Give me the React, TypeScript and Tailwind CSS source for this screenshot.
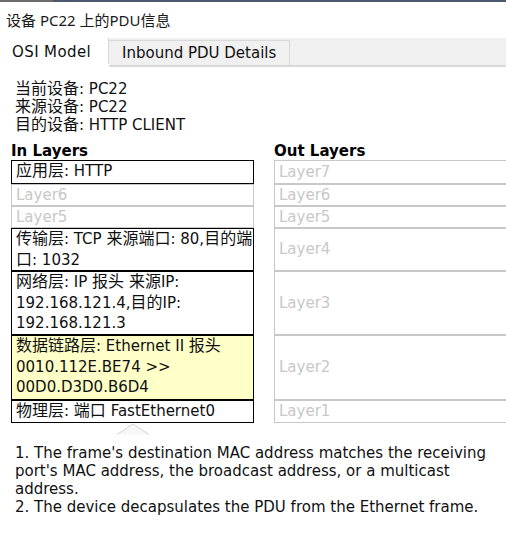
import type { ReactNode } from 'react'

const font = { fontFamily: '"DejaVu Sans", "Noto Sans CJK SC", sans-serif' }

// CJK runs are set a touch larger, as in the reference
function T({ s }: { s: string }) {
  const parts = s.split(/([\u3000-\u9fff\uff00-\uffef]+)/)
  return (
    <>
      {parts.map((p, i) =>
        /[\u3000-\u9fff\uff00-\uffef]/.test(p) ? (
          <span key={i} className="text-[16px]">
            {p}
          </span>
        ) : (
          <span key={i}>{p}</span>
        ),
      )}
    </>
  )
}

interface Row {
  inLines: string[] | null
  inLabel: string
  outLabel: string
  height: string
  yellow?: boolean
}

const rows: Row[] = [
  { inLines: ['应用层: HTTP'], inLabel: 'Layer7', outLabel: 'Layer7', height: 'h-[24px]' },
  { inLines: null, inLabel: 'Layer6', outLabel: 'Layer6', height: 'h-[22px]' },
  { inLines: null, inLabel: 'Layer5', outLabel: 'Layer5', height: 'h-[22px]' },
  { inLines: ['传输层: TCP 来源端口: 80,目的端', '口: 1032'], inLabel: '', outLabel: 'Layer4', height: 'h-[43px]' },
  {
    inLines: ['网络层: IP 报头 来源IP:', '192.168.121.4,目的IP:', '192.168.121.3'],
    inLabel: '',
    outLabel: 'Layer3',
    height: 'h-[64px]',
  },
  {
    inLines: ['数据链路层: Ethernet II 报头', '0010.112E.BE74 >>', '00D0.D3D0.B6D4'],
    inLabel: '',
    outLabel: 'Layer2',
    height: 'h-[65px]',
    yellow: true,
  },
  { inLines: ['物理层: 端口 FastEthernet0'], inLabel: '', outLabel: 'Layer1', height: 'h-[23px]' },
]

function Box({ children, active, yellow, height }: { children: ReactNode; active: boolean; yellow?: boolean; height: string }) {
  return (
    <div
      className={`${height} border px-[4px] overflow-hidden whitespace-nowrap ${
        active ? 'border-black text-[#101010]' : 'border-[#c8c8c8] text-[#c8c8c8] flex items-center'
      } ${yellow ? 'bg-[#ffffc8]' : 'bg-white'}`}
    >
      {children}
    </div>
  )
}

export default function App() {
  return (
    <div className="w-[506px] h-[559px] bg-white overflow-hidden text-[15px]" style={font}>
      <div className="flex h-[2px]">
        <div className="w-[53px] bg-[#6b6b6b]" />
        <div className="flex-1 bg-[#4b586a]" />
      </div>

      <div
        className="h-[36px] flex items-center pl-[6px] text-[15px] text-[#1a1a1a]"
        style={{ fontFamily: '"Noto Sans", "Noto Sans CJK SC", sans-serif' }}
      >
        设备 PC22 上的PDU信息
      </div>

      <div className="flex h-[26px]">
        <div className="w-[109px] bg-white border-r border-[#d9d9d9] flex items-center pl-[12px] pt-[3px] text-[#111] tracking-[0.4px]">
          OSI Model
        </div>
        <div className="flex-1 flex flex-col">
          <div className="h-[1px]" />
          <div className="flex-1 flex bg-[#f0f0f0] border-b-2 border-[#d9d9d9]">
            <div className="w-[181px] border-r border-t border-[#d9d9d9] mt-[2px] flex items-center pl-[13px] pt-[1px] text-[#111]">
              Inbound PDU Details
            </div>
          </div>
        </div>
      </div>

      <div className="pl-[15px] pt-[16px] leading-[18px] text-[#111]">
        <div>
          <T s="当前设备: PC22" />
        </div>
        <div>
          <T s="来源设备: PC22" />
        </div>
        <div>
          <T s="目的设备: HTTP CLIENT" />
        </div>
      </div>

      <div className="pl-[11px] pt-[9px]">
        <div className="grid grid-cols-[243px_243px] gap-x-[20px]">
          <div className="font-bold leading-[17px] text-black">In Layers</div>
          <div className="font-bold leading-[17px] text-black">Out Layers</div>
          {rows.map((r, i) => (
            <div key={i} className="contents">
              <Box active={r.inLines !== null} yellow={r.yellow} height={r.height}>
                {r.inLines ? (
                  <div className="leading-[20.5px]">
                    {r.inLines.map((l, j) => (
                      <div key={j}>
                        <T s={l} />
                      </div>
                    ))}
                  </div>
                ) : (
                  r.inLabel
                )}
              </Box>
              <Box active={false} height={r.height}>
                {r.outLabel}
              </Box>
            </div>
          ))}
          <div className="flex justify-center">
            <svg width="34" height="12" viewBox="0 0 34 12">
              <path d="M1 11.5 L17 1 L33 11.5 Z" fill="#f7f7f7" />
              <path d="M1 11.5 L17 1 L33 11.5" fill="none" stroke="#d4d4d4" strokeWidth="1" />
            </svg>
          </div>
        </div>
      </div>

      <div className="pl-[15px] pr-[6px] pt-[9px] w-[506px] leading-[18px] text-[#111]">
        <div>1. The frame's destination MAC address matches the receiving port's MAC address, the broadcast address, or a multicast address.</div>
        <div>2. The device decapsulates the PDU from the Ethernet frame.</div>
      </div>
    </div>
  )
}
